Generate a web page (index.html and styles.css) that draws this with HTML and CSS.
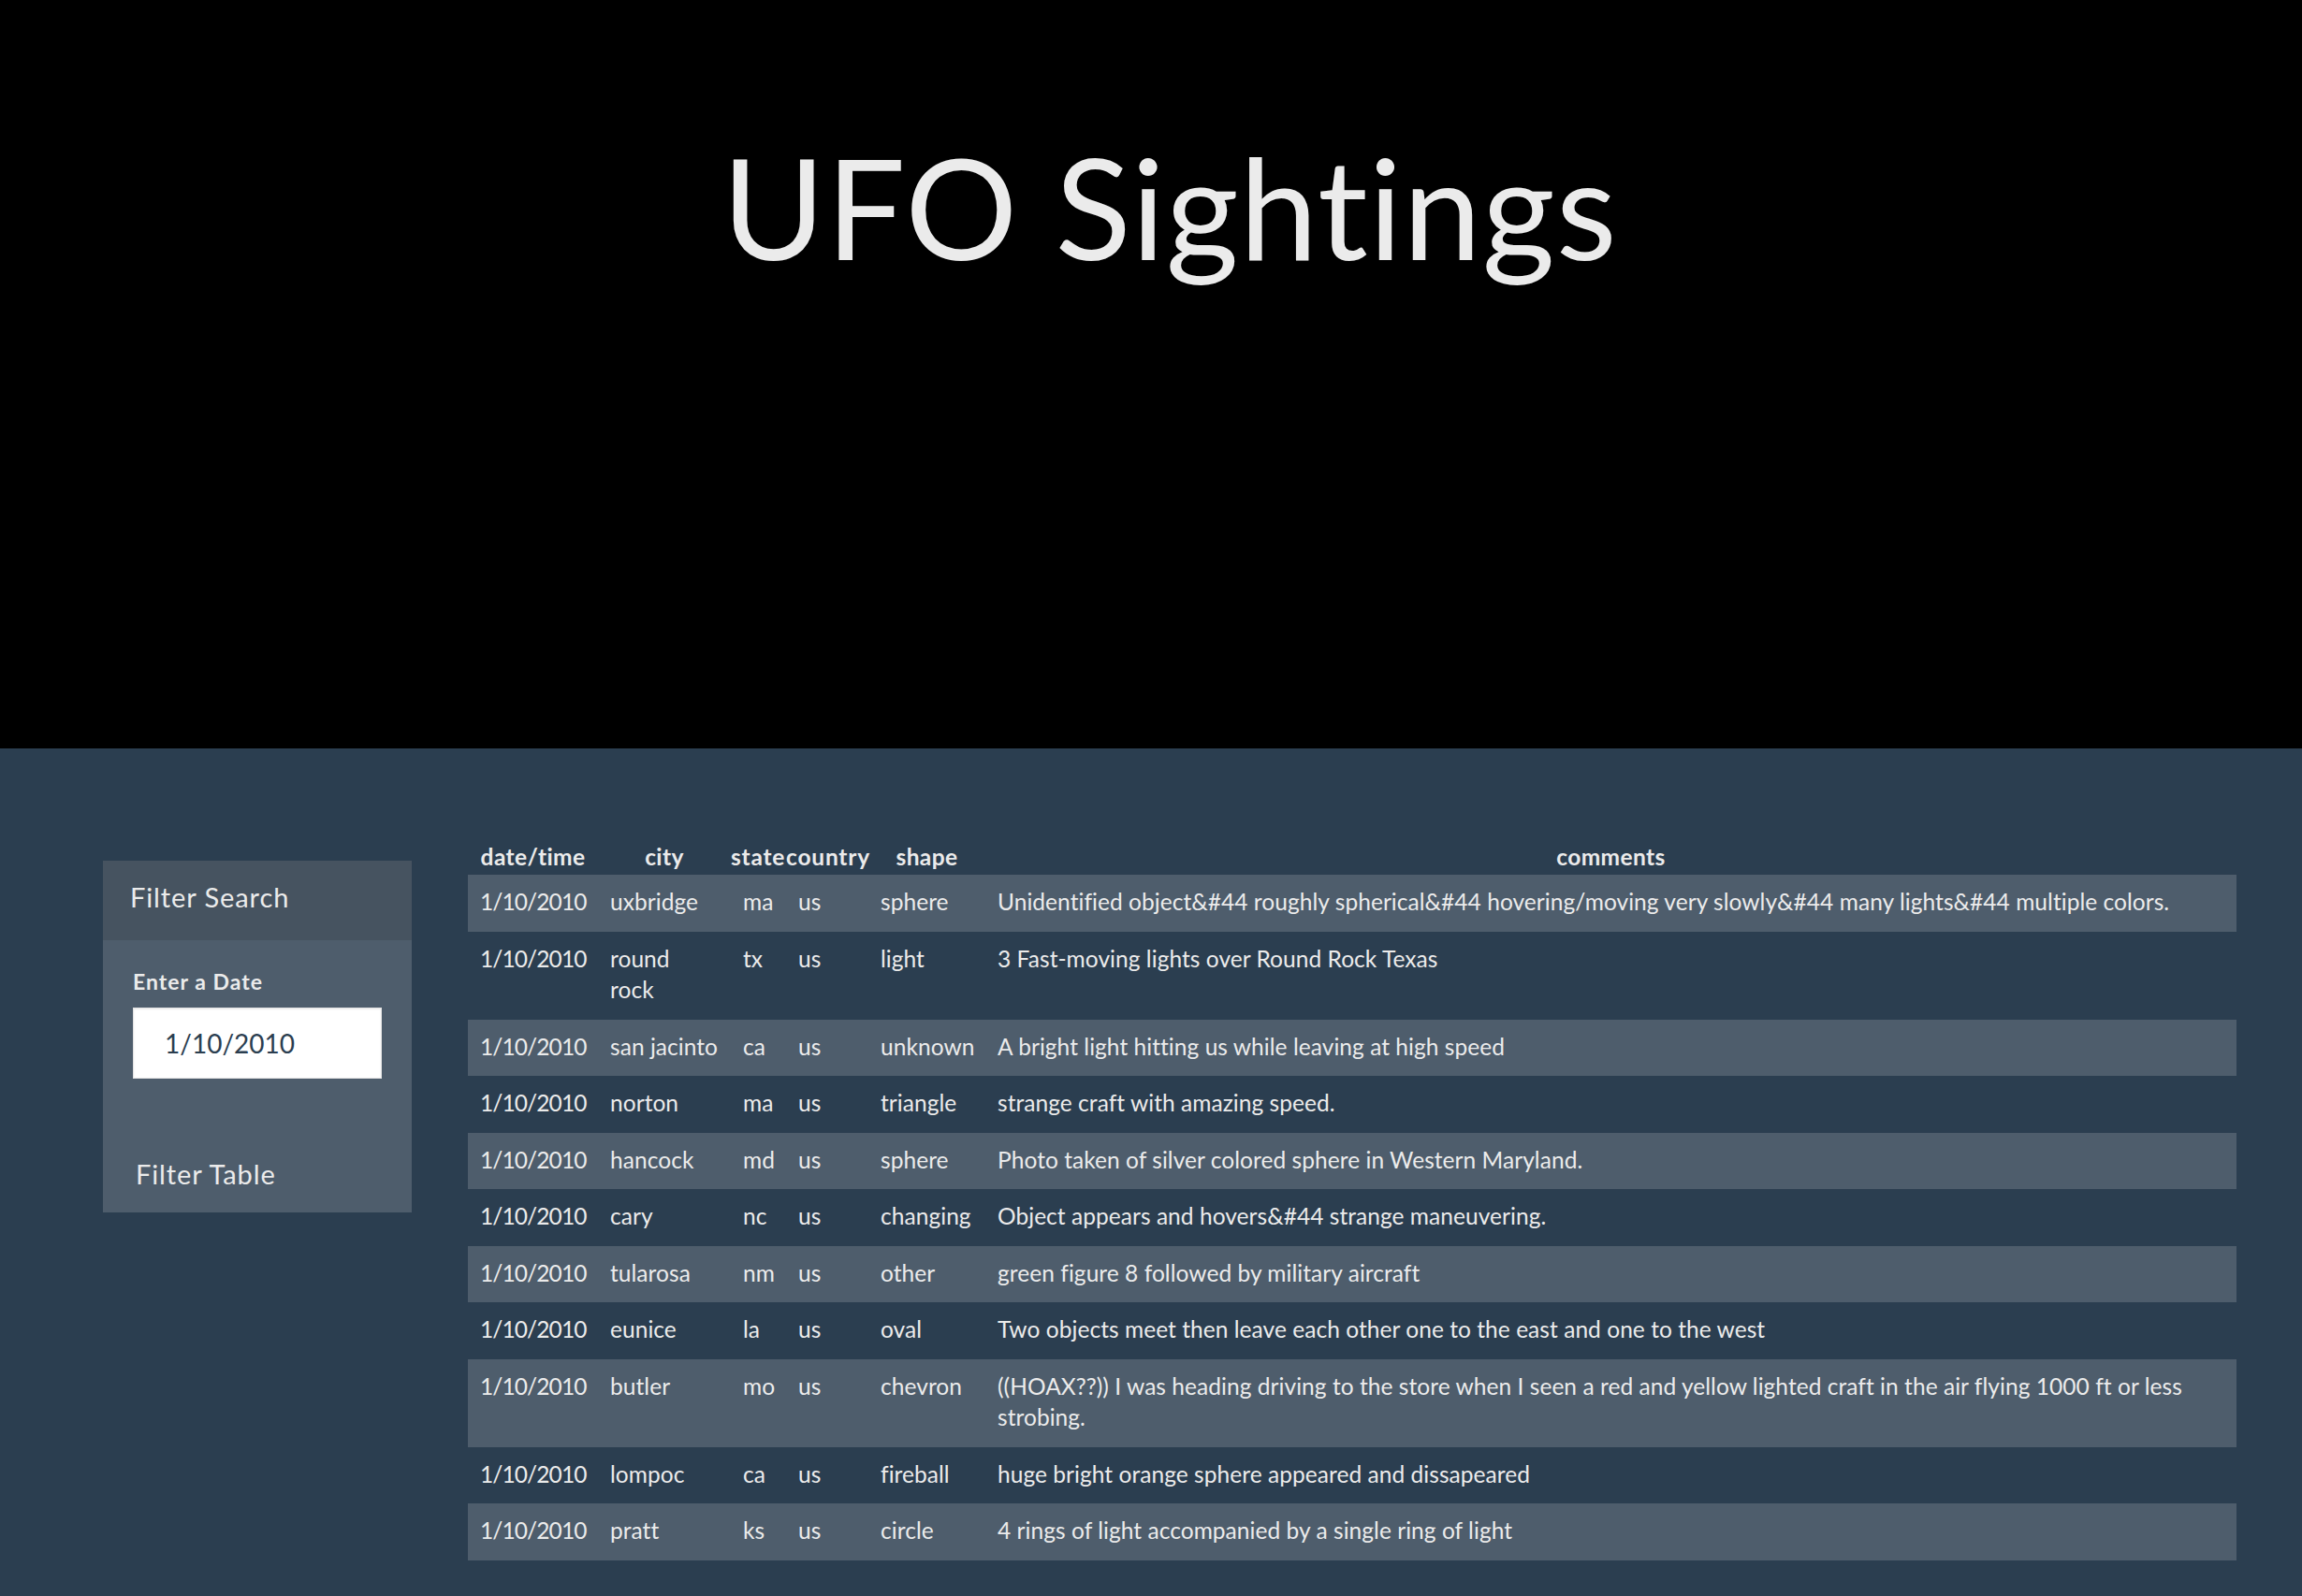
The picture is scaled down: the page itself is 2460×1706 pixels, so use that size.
FILE: index.html
```html
<!DOCTYPE html>
<html lang="en">
<head>
<meta charset="utf-8">
<title>UFO Sightings</title>
<link rel="stylesheet" href="styles.css">
</head>
<body>
<header class="hero">
  <h1 class="hero-title">UFO Sightings</h1>
</header>
<main class="main">
  <aside class="filter-card">
    <div class="filter-head">Filter Search</div>
    <div class="filter-body">
      <label class="filter-label" for="datetime">Enter a Date</label>
      <input class="filter-input" id="datetime" type="text" value="1/10/2010">
      <div class="filter-btn">Filter Table</div>
    </div>
  </aside>
  <section class="table-wrap">
    <table class="ufo-table">
      <colgroup>
        <col class="c-date"><col class="c-city"><col class="c-state"><col class="c-country"><col class="c-shape"><col class="c-comments">
      </colgroup>
      <thead>
        <tr><th>date/time</th><th>city</th><th class="th-state">state</th><th class="th-country">country</th><th>shape</th><th>comments</th></tr>
      </thead>
      <tbody>
        <tr><td>1/10/2010</td><td>uxbridge</td><td>ma</td><td>us</td><td>sphere</td><td>Unidentified object&amp;#44 roughly spherical&amp;#44 hovering/moving very slowly&amp;#44 many lights&amp;#44 multiple colors.</td></tr>
        <tr><td>1/10/2010</td><td>round<br>rock</td><td>tx</td><td>us</td><td>light</td><td>3 Fast-moving lights over Round Rock Texas</td></tr>
        <tr><td>1/10/2010</td><td>san jacinto</td><td>ca</td><td>us</td><td>unknown</td><td>A bright light hitting us while leaving at high speed</td></tr>
        <tr><td>1/10/2010</td><td>norton</td><td>ma</td><td>us</td><td>triangle</td><td>strange craft with amazing speed.</td></tr>
        <tr><td>1/10/2010</td><td>hancock</td><td>md</td><td>us</td><td>sphere</td><td>Photo taken of silver colored sphere in Western Maryland.</td></tr>
        <tr><td>1/10/2010</td><td>cary</td><td>nc</td><td>us</td><td>changing</td><td>Object appears and hovers&amp;#44 strange maneuvering.</td></tr>
        <tr><td>1/10/2010</td><td>tularosa</td><td>nm</td><td>us</td><td>other</td><td>green figure 8 followed by military aircraft</td></tr>
        <tr><td>1/10/2010</td><td>eunice</td><td>la</td><td>us</td><td>oval</td><td>Two objects meet then leave each other one to the east and one to the west</td></tr>
        <tr><td>1/10/2010</td><td>butler</td><td>mo</td><td>us</td><td>chevron</td><td>((HOAX??)) I was heading driving to the store when I seen a red and yellow lighted craft in the air flying 1000 ft or less strobing.</td></tr>
        <tr><td>1/10/2010</td><td>lompoc</td><td>ca</td><td>us</td><td>fireball</td><td>huge bright orange sphere appeared and dissapeared</td></tr>
        <tr><td>1/10/2010</td><td>pratt</td><td>ks</td><td>us</td><td>circle</td><td>4 rings of light accompanied by a single ring of light</td></tr>
      </tbody>
    </table>
  </section>
</main>
</body>
</html>
```
FILE: styles.css
```css
* { box-sizing: border-box; }

html, body {
  margin: 0;
  padding: 0;
}

body {
  background: #2b3e50;
  color: #ebebeb;
  font-family: "Lato", "Open Sans", "DejaVu Sans", sans-serif;
  min-height: 1706px;
}

.hero {
  background: #000;
  height: 800px;
  padding: 130px 0 0 40px;
  text-align: center;
}

.hero-title {
  margin: 0;
  font-size: 150px;
  line-height: 1.2;
  font-weight: 400;
  letter-spacing: 0.8px;
  color: #ebebeb;
}

.main {
  display: flex;
  align-items: flex-start;
  gap: 60px;
  padding: 99px 70px 40px 110px;
  background: #2b3e50;
}

.filter-card {
  flex: 0 0 330px;
  margin-top: 21px;
  background: #4e5d6c;
}

.filter-head {
  background: #465360;
  font-size: 29px;
  letter-spacing: 0.9px;
  line-height: 1.2;
  padding: 22px 29px 28px;
}

.filter-body {
  padding: 31px 32px 23px 32px;
  display: flex;
  flex-direction: column;
  align-items: flex-start;
}

.filter-label {
  font-size: 23px;
  font-weight: 700;
  letter-spacing: 1px;
  line-height: 1.2;
  margin-bottom: 14px;
}

.filter-input {
  width: 266px;
  height: 76px;
  border: 1px solid #e4e4e4;
  box-shadow: inset 0 1px 2px rgba(0,0,0,0.08);
  background: #fff;
  color: #2b3e50;
  font-family: "Lato", "Open Sans", sans-serif;
  font-size: 28px;
  padding: 0 0 0 33px;
  margin: 0 0 85px;
  outline: none;
}

.filter-btn {
  font-size: 29px;
  letter-spacing: 0.9px;
  line-height: 1.2;
  padding-left: 3px;
}

.table-wrap {
  flex: 1 1 auto;
}

.ufo-table {
  width: 1890px;
  table-layout: fixed;
  border-collapse: collapse;
  font-size: 24.5px;
  letter-spacing: 0.05px;
  line-height: 33.5px;
}

.c-date { width: 139px; }
.c-city { width: 142px; }
.c-state { width: 59px; }
.c-country { width: 88px; }
.c-shape { width: 125px; }

.ufo-table th {
  font-weight: 700;
  text-align: center;
  letter-spacing: 0.4px;
  padding: 0 0 2.5px;
  white-space: nowrap;
}

.ufo-table th.th-state {
  text-align: left;
  letter-spacing: 0.8px;
}

.ufo-table th.th-country {
  text-align: right;
  letter-spacing: 0.8px;
}

.ufo-table td {
  padding: 12px 13px 15px;
  vertical-align: top;
  text-align: left;
}

.ufo-table td:first-child {
  letter-spacing: -0.9px;
}

.ufo-table tbody tr:nth-child(odd) {
  background: #4e5d6c;
}
```
